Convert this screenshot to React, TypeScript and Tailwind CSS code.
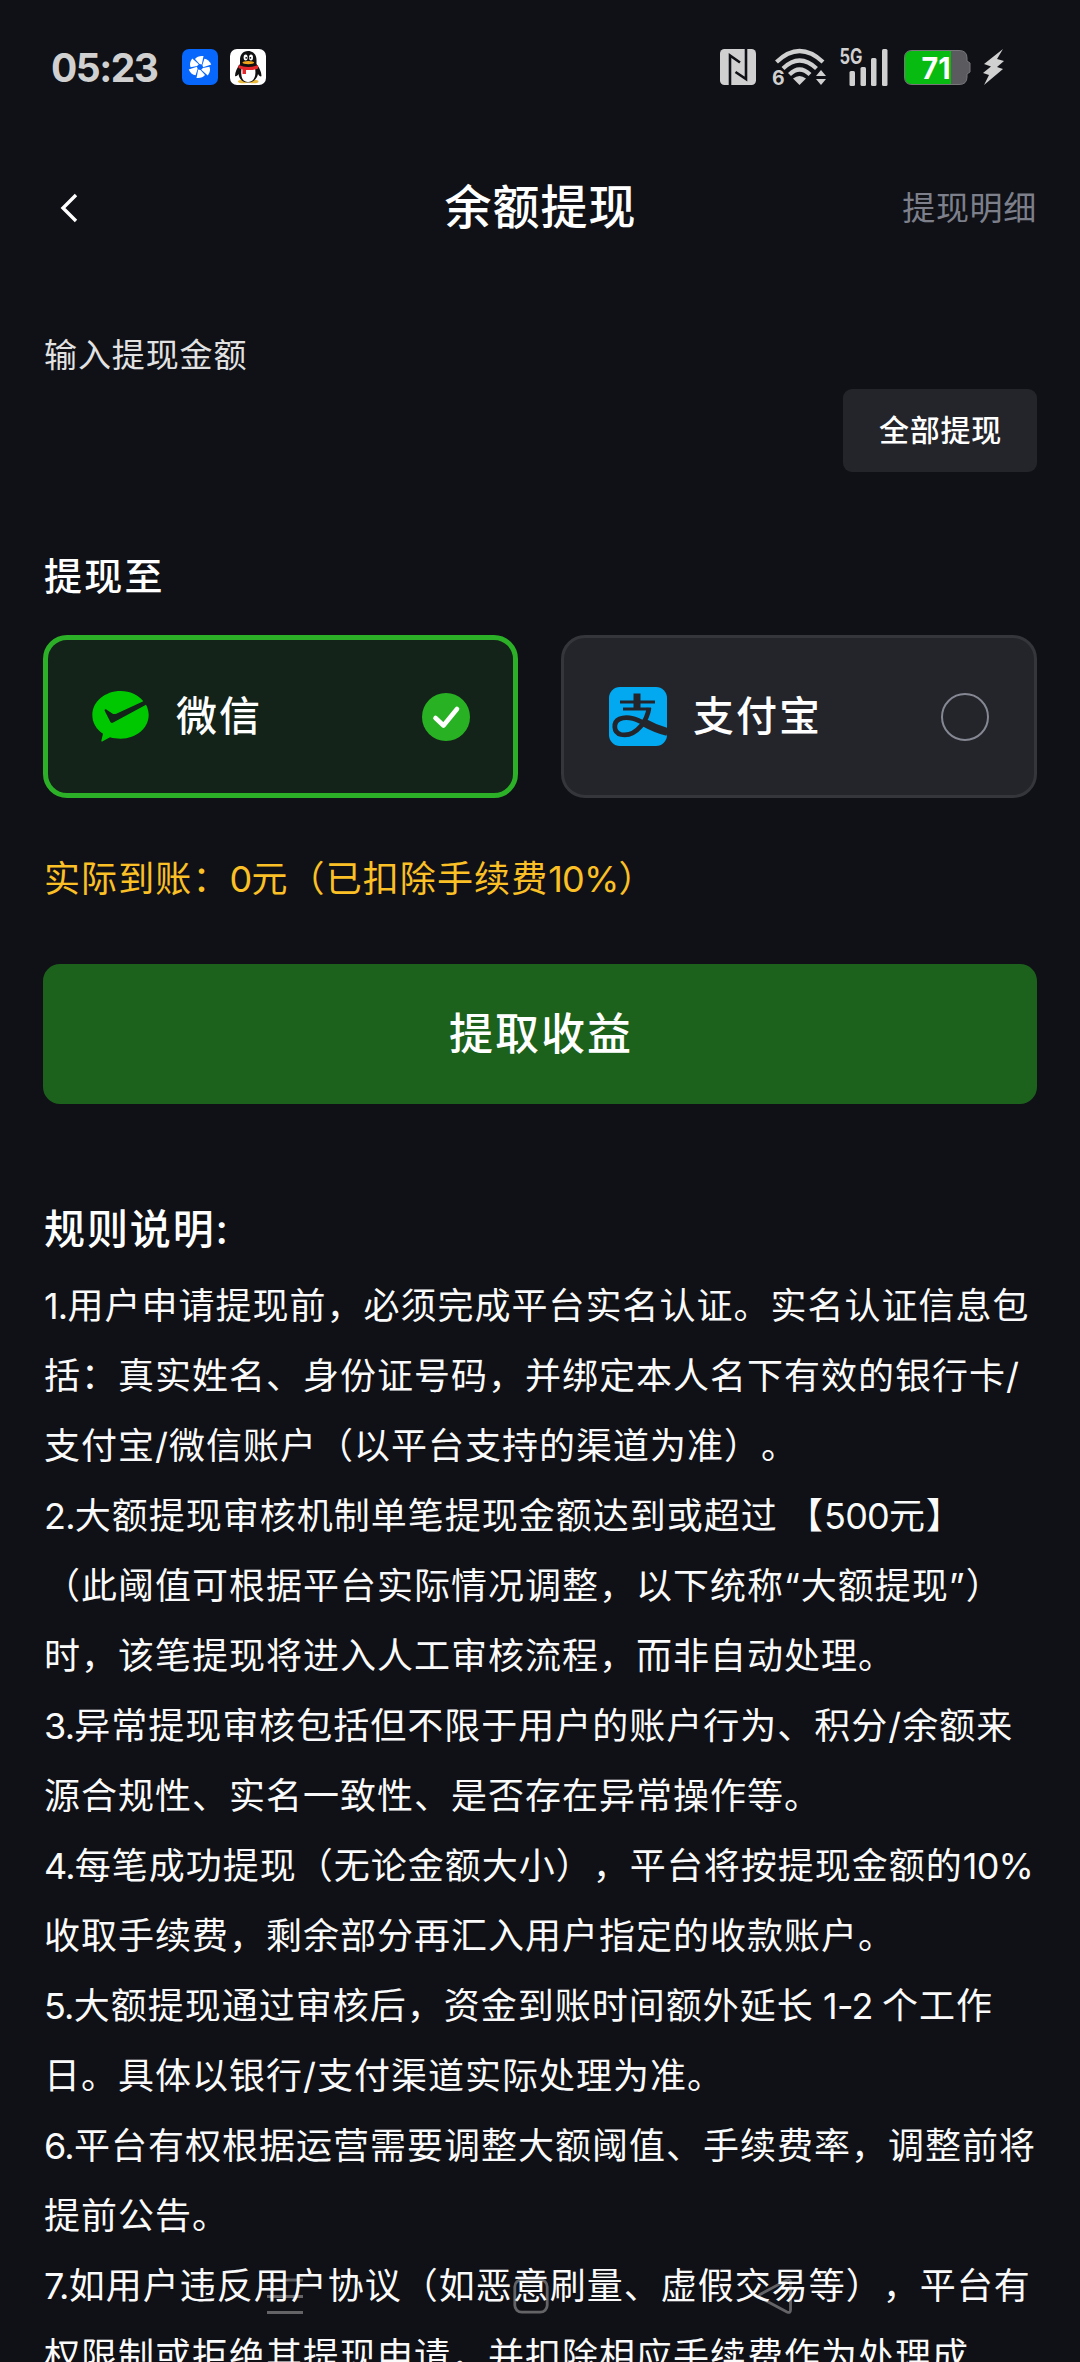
import React from 'react';

interface PayMethod {
  id: string;
  name: string;
  selected: boolean;
  icon: React.ReactNode;
}

const WechatPayIcon = () => (
  <svg className="w-[57px] h-[51px]" viewBox="184 457 171 153">
    <path
      fill="#00c800"
      d="M270 457C223 457 185 489 185 529C185 552 197 572 217 585L212 606C212 609 214 609 216 608L238 596C248 599 259 600 270 600C317 600 354 568 354 529C354 518 351 507 346 498L249 551C243 555 240 552 238 548L222 516C221 512 225 511 228 513L246 525C250 527 253 526 257 525L338 488C323 469 298 457 270 457Z"
    />
  </svg>
);

const AlipayIcon = () => (
  <svg className="w-[58px] h-[59px]" viewBox="0 0 58 59">
    <rect width="58" height="59" rx="11" fill="#02a9f1" />
    <g fill="none" stroke="#24252b">
      <path d="M11 15H46M14 22H42" strokeWidth="3.2" />
      <path d="M28 6.500V22" strokeWidth="7" />
      <path d="M40 21C39 28 36 34 32 39C26 46 19 49 12 47.500C4 45.500 4 35 10.500 32C19 28 29 33 37 37" strokeWidth="4.800" />
      <path d="M35 35.500C43 40 51 43 58.500 45" strokeWidth="8" />
    </g>
  </svg>
);

const CheckedDot = () => (
  <svg className="w-[48px] h-[48px]" viewBox="0 0 48 48">
    <circle cx="24" cy="24" r="24" fill="#28b223" />
    <path d="M13.500 25L21.500 32.500L35 16" fill="none" stroke="#fff" strokeWidth="4.600" strokeLinecap="round" strokeLinejoin="round" />
  </svg>
);

const methods: PayMethod[] = [
  { id: 'wechat', name: '微信', selected: true, icon: <WechatPayIcon /> },
  { id: 'alipay', name: '支付宝', selected: false, icon: <AlipayIcon /> },
];

const ruleLines = [
  '1.用户申请提现前，必须完成平台实名认证。实名认证信息包',
  '括：真实姓名、身份证号码，并绑定本人名下有效的银行卡/',
  '支付宝/微信账户（以平台支持的渠道为准）。',
  '2.大额提现审核机制单笔提现金额达到或超过 【500元】',
  '（此阈值可根据平台实际情况调整，以下统称“大额提现”）',
  '时，该笔提现将进入人工审核流程，而非自动处理。',
  '3.异常提现审核包括但不限于用户的账户行为、积分/余额来',
  '源合规性、实名一致性、是否存在异常操作等。',
  '4.每笔成功提现（无论金额大小），平台将按提现金额的10%',
  '收取手续费，剩余部分再汇入用户指定的收款账户。',
  '5.大额提现通过审核后，资金到账时间额外延长 1-2 个工作',
  '日。具体以银行/支付渠道实际处理为准。',
  '6.平台有权根据运营需要调整大额阈值、手续费率，调整前将',
  '提前公告。',
  '7.如用户违反用户协议（如恶意刷量、虚假交易等），平台有',
  '权限制或拒绝其提现申请，并扣除相应手续费作为处理成',
];

// Digits sit tighter than the Chinese characters around them
const MixedText = ({ text }: { text: string }) => (
  <>
    {text.split(/([0-9.%\- ]+)/).map((part, i) =>
      i % 2 === 1 ? <span key={i} className="tracking-[-0.8px]">{part}</span> : part
    )}
  </>
);

const StatusBar = () => (
  <div className="flex h-[134px] items-center pl-[51px] pr-[76px] text-[#d0d0d0]">
    <span className="w-[131px] text-[39px] font-bold leading-none tracking-[-1.5px] whitespace-nowrap">05:23</span>
    <div className="flex gap-3">
      <svg className="w-9 h-9" viewBox="0 0 36 36">
        <rect width="36" height="36" rx="7" fill="#0766fb" />
        <g fill="#fff">
          {[0, 60, 120, 180, 240, 300].map((angle) => (
            <path key={angle} d="M17.500 15L13 10Q15.500 6.500 21.500 7L19.800 15.500Z" transform={`rotate(${angle} 18 18)`} />
          ))}
        </g>
      </svg>
      <svg className="w-9 h-9" viewBox="0 0 36 36">
        <rect width="36" height="36" rx="7" fill="#fff" />
        <ellipse cx="13" cy="32.500" rx="5" ry="1.800" fill="#e9b93a" />
        <ellipse cx="23.500" cy="32.500" rx="5" ry="1.800" fill="#e9b93a" />
        <path d="M18 2C12.500 2 10 6 10 11V15C7 19 5 23 5 27C6 28 8 26 8.500 25C9 30 13 33.500 18 33.500S27 30 28 25C29 27 31 28 31.500 27C31.500 23 29 18 26.500 15V11C26.500 6 23.500 2 18 2Z" fill="#111" />
        <path d="M11.500 19H25C26.500 27 24 33 18 33S10.500 27 11.500 19Z" fill="#fff" />
        <ellipse cx="15.600" cy="8.500" rx="2" ry="2.900" fill="#fff" />
        <ellipse cx="21" cy="8.500" rx="2" ry="2.900" fill="#fff" />
        <circle cx="16.200" cy="8.800" r="0.900" fill="#111" />
        <circle cx="20.400" cy="8.800" r="0.900" fill="#111" />
        <ellipse cx="18.300" cy="13.600" rx="5.800" ry="1.700" fill="#f2a51b" />
        <path d="M8.500 16Q18 20 28 16V19.500Q23 21.500 16 21V25H12.500V20.500L8.500 19Z" fill="#e4282c" />
      </svg>
    </div>
    <div className="ml-auto flex items-center">
      {/* NFC */}
      <svg className="w-9 h-9" viewBox="0 0 36 36">
        <rect width="36" height="36" rx="4.500" fill="#d0d0d0" />
        <path d="M10 36V6.500L20 13.500M26 0V30L15.500 23" fill="none" stroke="#101116" strokeWidth="2.600" />
      </svg>
      {/* Wi-Fi 6 */}
      <svg className="ml-[17px] w-[54px] h-9 overflow-visible" viewBox="0 0 54 36">
        <g fill="none" stroke="#d0d0d0" strokeWidth="4.200">
          <path d="M3.500 13Q26.500 -9 50 13" />
          <path d="M10 19.500Q26.500 3.500 43.500 19.500" />
          <path d="M16.500 25.500Q26.500 15.500 37 25.500" />
        </g>
        <path d="M20 29.500Q26.500 24.500 33 29.500L26.500 36Z" fill="#d0d0d0" />
        <path d="M43 27L48 21L53 27ZM43 30L48 36L53 30Z" fill="#d0d0d0" />
        <text x="-1" y="36" fontSize="19.500" fontWeight="700" fill="#d0d0d0">6</text>
      </svg>
      {/* 5G signal */}
      <svg className="ml-[13px] w-12 h-[37px] overflow-visible" viewBox="0 0 48 37">
        <text x="-0.500" y="15" fontSize="21" fontWeight="700" fill="#d0d0d0" textLength="23" lengthAdjust="spacingAndGlyphs">5G</text>
        <g fill="#d0d0d0">
          <rect x="9.500" y="22" width="5.500" height="15" rx="1.500" />
          <rect x="20.500" y="18" width="5.500" height="19" rx="1.500" />
          <rect x="31" y="9" width="5.500" height="28" rx="1.500" />
          <rect x="42" y="0" width="5.500" height="37" rx="1.500" />
        </g>
      </svg>
      {/* Battery */}
      <svg className="ml-4 w-[67px] h-[35px]" viewBox="0 0 67 35">
        <path d="M8 0.500H55Q63 0.500 63 8V11L66 13V22L63 24V27Q63 34.500 55 34.500H8Q0.500 34.500 0.500 27V8Q0.500 0.500 8 0.500Z" fill="#5b5b5f" stroke="#77777a" />
        <path d="M47 1V34H8Q1 34 1 27V8Q1 1 8 1Z" fill="#07bb11" />
        <text x="17.500" y="28.500" fontSize="30.500" fontWeight="700" fill="#fff" textLength="29" lengthAdjust="spacingAndGlyphs">71</text>
      </svg>
      <svg className="ml-3 w-[21px] h-9" viewBox="0 0 21 36">
        <path d="M20 0L1 15L8 17.500L0 24L6 26L1 36L20 20L14 18L21 12L14 10Z" fill="#d0d0d0" />
      </svg>
    </div>
  </div>
);

const NavBar = () => (
  <div className="absolute left-0 bottom-0 flex h-[84px] w-full items-start pl-[267px] opacity-35">
    <svg className="w-9 h-9" viewBox="0 0 36 36">
      <path d="M0 2H36M0 18.500H36M0 34.500H36" stroke="#fff" strokeWidth="3" />
    </svg>
    <svg className="ml-[210px] w-9 h-9" viewBox="0 0 36 36">
      <rect x="1.800" y="1.800" width="32.400" height="32.400" rx="7" fill="none" stroke="#fff" strokeWidth="2.800" />
    </svg>
    <svg className="ml-[208px] w-9 h-9" viewBox="0 0 36 36">
      <path d="M3 16.500Q1 18 3 19.500L30 34Q33.500 35.500 33.500 32V4Q33.500 0.500 30 2Z" fill="none" stroke="#fff" strokeWidth="2.800" />
    </svg>
  </div>
);

const App: React.FC = () => {
  return (
    <div className="relative h-[2362px] w-[1080px] overflow-hidden bg-[#101116] font-[Inter,'Noto_Sans_CJK_SC',sans-serif] text-white [text-spacing-trim:space-all]">
      <StatusBar />

      <header className="grid h-[146px] grid-cols-3 items-center pl-[59px] pr-[43px] pt-[2px]">
        <svg className="w-5 h-8" viewBox="0 0 20 32">
          <path d="M17 3L4 16L17 29" fill="none" stroke="#fff" strokeWidth="3.400" />
        </svg>
        <h1 className="-ml-[15px] pb-[2px] text-center text-[47px] font-medium tracking-[1px] whitespace-nowrap">余额提现</h1>
        <span className="pt-px text-right text-[33px] tracking-[0.7px] text-[#7d808b]">提现明细</span>
      </header>

      <main className="flex flex-col px-[43px] pt-[50px]">
        <div className="pl-px text-[33px] leading-[50px] tracking-[0.9px] text-[#e2e2e3]">输入提现金额</div>
        <button className="mt-[9px] h-[83px] w-[194px] self-end rounded-[9px] bg-[#24252b] pl-px text-[30px] font-medium tracking-[0.7px]">
          全部提现
        </button>

        <h2 className="mt-[79px] pl-px text-[38px] font-medium leading-[50px] tracking-[2.3px]">提现至</h2>
        <div className="mt-[34px] grid grid-cols-[475px_476px] gap-[43px]">
          {methods.map((m) => (
            <div
              key={m.id}
              className={`flex h-[163px] items-center rounded-[24px] ${
                m.selected
                  ? 'border-[5px] border-[#2bb027] bg-[#142319] pl-[44px] pr-[43px]'
                  : 'border-[3px] border-[#35363b] bg-[#24252b] pl-[45px] pr-[45px]'
              }`}
            >
              {m.icon}
              <span className={`text-[41px] font-medium tracking-[2px] ${m.selected ? 'ml-[27px]' : 'ml-[26px]'}`}>{m.name}</span>
              <div className="ml-auto">
                {m.selected ? <CheckedDot /> : <div className="h-12 w-12 rounded-full border-2 border-[#858892]" />}
              </div>
            </div>
          ))}
        </div>

        <div className="mt-[56px] pl-px text-[36px] leading-[50px] tracking-[1.1px] text-[#fbc025]">
          <MixedText text="实际到账：0元（已扣除手续费10%）" />
        </div>
        <button className="mt-[60px] h-[140px] rounded-[17px] bg-[#1c611c] pl-[2px] text-[44px] font-medium tracking-[2px]">提取收益</button>

        <h2 className="mt-[95px] pl-px text-[41px] font-medium leading-[60px] tracking-[1.9px]">规则说明:</h2>
        <div className="mt-[12px] pl-px text-[36px] leading-[70px] tracking-[1px] text-[#fafafa]">
          {ruleLines.map((line) => (
            <p key={line} className="whitespace-pre">
              <MixedText text={line} />
            </p>
          ))}
        </div>
      </main>

      <NavBar />
    </div>
  );
};

export default App;
